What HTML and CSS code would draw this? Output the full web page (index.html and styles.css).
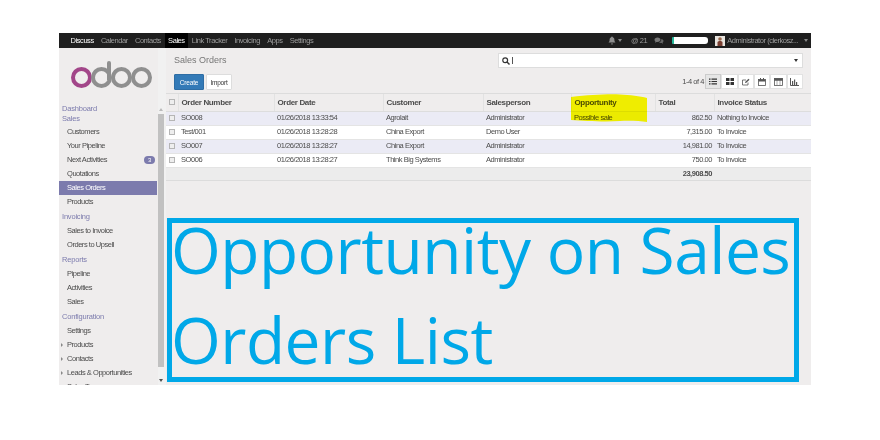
FILE: index.html
```html
<!DOCTYPE html>
<html lang="en">
<head>
  <meta charset="UTF-8">
  <title>Sales Orders - Odoo</title>
  <link rel="stylesheet" href="styles.css">
</head>
<body>
  <div class="window">
    <div class="navbar">
      <div class="apps">
        <a class="app first">Discuss</a>
        <a class="app">Calendar</a>
        <a class="app">Contacts</a>
        <a class="app active">Sales</a>
        <a class="app">Link Tracker</a>
        <a class="app">Invoicing</a>
        <a class="app">Apps</a>
        <a class="app">Settings</a>
      </div>
      <div class="systray">
        <svg class="tray-icon" width="8" height="9" viewBox="0 0 8 9"><path d="M4 0.5c.5 0 .8.3.8.8 1.2.4 1.6 1.4 1.6 2.7 0 1.2.4 1.9 1.1 2.5H.5c.7-.6 1.1-1.3 1.1-2.5 0-1.3.4-2.3 1.6-2.7 0-.5.3-.8.8-.8zM3 7.4h2c0 .6-.4 1-1 1s-1-.4-1-1z" fill="#8f8f8f"/></svg>
        <span class="caret small"></span>
        <span class="tray-text at">@ 21</span>
        <svg class="tray-icon chat" width="10" height="8" viewBox="0 0 10 8"><path d="M3.5.5c1.8 0 3 1 3 2.2S5.3 5 3.5 5c-.4 0-.7 0-1-.1L1 5.8l.4-1.3C.8 4 .5 3.400.5 2.700.5 1.500 1.700.5 3.500.5z" fill="#777"/><path d="M7.300 2c1.300.2 2.200 1 2.200 2 0 .6-.3 1.100-.8 1.500l.3 1.200-1.400-.8c-1.100.2-2.200-.1-2.800-.7 1.700-.1 2.700-1.400 2.500-3.200z" fill="#666"/></svg>
        <span class="redacted"></span>
        <svg class="avatar" width="10" height="10" viewBox="0 0 10 10"><rect width="10" height="10" fill="#e8e4de"/><circle cx="5" cy="3" r="1.800" fill="#9a6a4e"/><path d="M2.500 10V6.500C2.500 5.500 3.500 5 5 5s2.500.5 2.500 1.500V10z" fill="#7a3f32"/></svg>
        <span class="tray-text user">Administrator (clerkosz...</span>
        <span class="caret small"></span>
      </div>
    </div>

    <div class="body-row">
      <aside class="sidebar">
        <div class="logo">
          <span class="logo-o purple"></span><span class="logo-d"><span class="logo-o"></span><span class="logo-stem"></span></span><span class="logo-o"></span><span class="logo-o"></span>
        </div>
        <div class="menu-scroll">
          <div class="menu-head first">Dashboard</div>
          <div class="menu-head">Sales</div>
          <ul class="menu">
            <li>Customers</li>
            <li>Your Pipeline</li>
            <li>Next Activities <span class="badge">3</span></li>
            <li>Quotations</li>
            <li class="selected">Sales Orders</li>
            <li>Products</li>
          </ul>
          <div class="menu-head">Invoicing</div>
          <ul class="menu">
            <li>Sales to Invoice</li>
            <li>Orders to Upsell</li>
          </ul>
          <div class="menu-head">Reports</div>
          <ul class="menu">
            <li>Pipeline</li>
            <li>Activities</li>
            <li>Sales</li>
          </ul>
          <div class="menu-head">Configuration</div>
          <ul class="menu">
            <li>Settings</li>
            <li class="folder">Products</li>
            <li class="folder">Contacts</li>
            <li class="folder">Leads &amp; Opportunities</li>
            <li>Sales Teams</li>
          </ul>
        </div>
      </aside>
      <div class="scrollbar">
        <span class="arrow up"></span>
        <span class="thumb"></span>
        <span class="arrow down"></span>
      </div>

      <main class="main">
        <div class="control-panel">
          <div class="cp-left">
            <div class="breadcrumb">Sales Orders</div>
            <div class="buttons">
              <button class="btn primary">Create</button>
              <button class="btn">Import</button>
            </div>
          </div>
          <div class="cp-right">
            <div class="search">
              <svg width="8" height="8" viewBox="0 0 8 8"><circle cx="3.200" cy="3.200" r="2.400" fill="none" stroke="#333" stroke-width="1.200"/><path d="M5 5l2.500 2.500" stroke="#333" stroke-width="1.400"/></svg>
              <span class="cursor"></span>
              <span class="caret search-caret"></span>
            </div>
            <div class="pager-row">
              <span class="pager">1-4 of 4</span>
              <div class="switcher">
                <span class="view on"><svg width="8" height="7" viewBox="0 0 8 7"><path d="M0 .5h1.500v1.200H0zM2.500 .5H8v1.200H2.500zM0 2.900h1.500v1.200H0zM2.500 2.900H8v1.200H2.500zM0 5.300h1.500v1.200H0zM2.500 5.300H8v1.200H2.500z" fill="#333"/></svg></span>
                <span class="view"><svg width="8" height="7" viewBox="0 0 8 7"><path d="M0 0h3.500v3H0zM4.500 0H8v3H4.500zM0 4h3.500v3H0zM4.500 4H8v3H4.500z" fill="#333"/></svg></span>
                <span class="view"><svg width="8" height="8" viewBox="0 0 8 8"><path d="M6 4.500V7H.5V2H4" fill="none" stroke="#555" stroke-width=".8"/><path d="M3 5l.3-1.300L6.500.7l1 1-3.200 3z" fill="#555"/></svg></span>
                <span class="view"><svg width="8" height="8" viewBox="0 0 8 8"><rect x=".5" y="1.500" width="7" height="6" fill="none" stroke="#555" stroke-width=".8"/><path d="M.5 1.500h7v2h-7zM2 0h1v2H2zM5 0h1v2H5z" fill="#555"/></svg></span>
                <span class="view"><svg width="9" height="8" viewBox="0 0 9 8"><rect x=".5" y=".5" width="8" height="7" fill="none" stroke="#555" stroke-width=".8"/><path d="M.5.500h8v2h-8zM3 2v5M6 2v5" fill="#555" stroke="#555" stroke-width=".5"/></svg></span>
                <span class="view"><svg width="9" height="8" viewBox="0 0 9 8"><path d="M.5 0v7.500H9" fill="none" stroke="#555"/><path d="M2 3h1.200v4H2zM4 1.500h1.200V7H4zM6 4h1.200v3H6z" fill="#555"/></svg></span>
              </div>
            </div>
          </div>
        </div>

        <table class="orders">
          <colgroup>
            <col class="c-check"><col class="c-number"><col class="c-date"><col class="c-customer"><col class="c-person"><col class="c-opp"><col class="c-total"><col class="c-status">
          </colgroup>
          <thead>
            <tr>
              <th><span class="check"></span></th>
              <th>Order Number</th>
              <th>Order Date</th>
              <th>Customer</th>
              <th>Salesperson</th>
              <th>Opportunity</th>
              <th class="total-head">Total</th>
              <th>Invoice Status</th>
            </tr>
          </thead>
          <tbody>
            <tr>
              <td><span class="check"></span></td>
              <td>SO008</td><td>01/26/2018 13:33:54</td><td>Agrolait</td><td>Administrator</td><td>Possible sale</td><td class="num">862.50</td><td>Nothing to Invoice</td>
            </tr>
            <tr>
              <td><span class="check"></span></td>
              <td>Test/001</td><td>01/26/2018 13:28:28</td><td>China Export</td><td>Demo User</td><td></td><td class="num">7,315.00</td><td>To Invoice</td>
            </tr>
            <tr>
              <td><span class="check"></span></td>
              <td>SO007</td><td>01/26/2018 13:28:27</td><td>China Export</td><td>Administrator</td><td></td><td class="num">14,981.00</td><td>To Invoice</td>
            </tr>
            <tr>
              <td><span class="check"></span></td>
              <td>SO006</td><td>01/26/2018 13:28:27</td><td>Think Big Systems</td><td>Administrator</td><td></td><td class="num">750.00</td><td>To Invoice</td>
            </tr>
          </tbody>
          <tfoot>
            <tr>
              <td></td><td></td><td></td><td></td><td></td><td></td><td class="num">23,908.50</td><td></td>
            </tr>
          </tfoot>
        </table>
      </main>
    </div>

    <!-- yellow marker drawn over the Opportunity column -->
    <svg class="marker" width="78" height="30" viewBox="0 0 78 30">
      <path d="M1 3C20 1 35 0 50 .5c10 .5 20 1.500 27 3.500V28C70 27 60 26.500 50 27 35 28 15 27 1 26z" fill="#f0f000"/>
    </svg>

    <!-- caption pasted on top of the screenshot -->
    <div class="caption"><div class="caption-text">Opportunity on Sales Orders List</div></div>
  </div>
</body>
</html>
```

FILE: styles.css
```css
* {
  box-sizing: border-box;
}

body {
  margin: 0;
  background: #fff;
  font-family: "Liberation Sans", Arial, sans-serif;
  font-size: 7.500px;
  letter-spacing: -.45px;
  color: #4c4c4c;
}

.window {
  position: relative;
  width: 752px;
  height: 352px;
  margin: 33px 0 0 59px;
  background: #efeded;
  overflow: hidden;
}

/* top bar */
.navbar {
  display: flex;
  justify-content: space-between;
  height: 15px;
  background: #1f1f1f;
  color: #9d9d9d;
  filter: blur(.25px);
}

.apps {
  display: flex;
  padding-left: 8px;
}

.app {
  padding: 0 3.600px;
  line-height: 15px;
  white-space: nowrap;
}

.app.first {
  color: #fff;
}

.app.active {
  background: #000;
  color: #fff;
}

.systray {
  display: flex;
  align-items: center;
  padding-right: 3px;
}

.tray-icon {
  display: block;
}

.tray-text.at {
  margin-left: 9px;
}

.chat {
  margin-left: 7px;
}

.redacted {
  width: 36px;
  height: 7px;
  margin-left: 8px;
  border-left: 2px solid #26b99a;
  border-radius: 1px 3px 3px 1px;
  background: #fff;
}

.avatar {
  margin-left: 7px;
}

.tray-text.user {
  margin-left: 2px;
  margin-right: 4px;
  white-space: nowrap;
}

.caret {
  display: inline-block;
  width: 0;
  height: 0;
  border-top: 3px solid #888;
  border-left: 2.500px solid transparent;
  border-right: 2.500px solid transparent;
}

.caret.small {
  margin-left: 2px;
}

.body-row {
  display: flex;
  height: 337px;
  filter: blur(.25px);
}

/* left menu */
.sidebar {
  width: 99px;
  overflow: hidden;
}

.logo {
  display: flex;
  align-items: flex-end;
  height: 40px;
  padding-left: 12px;
}

.logo-o {
  display: block;
  width: 21px;
  height: 21px;
  margin-right: -1px;
  border: 4px solid #8f8f8f;
  border-radius: 50%;
}

.logo-o.purple {
  border-color: #a24689;
}

.logo-d {
  position: relative;
  display: block;
}

.logo-stem {
  position: absolute;
  right: 0;
  bottom: 8px;
  width: 4px;
  height: 19px;
  background: #8f8f8f;
  border-radius: 2px 2px 0 0;
}

.menu-scroll {
  padding-top: 16px;
}

.menu-head {
  margin-top: 3px;
  padding-left: 3px;
  color: #7c7bad;
  letter-spacing: -.2px;
  line-height: 10px;
}

.menu-head.first {
  margin-top: 0;
}

.menu-head + .menu-head {
  margin-top: 0;
  margin-bottom: -1px;
}

.menu {
  margin: 2px 0 0;
  padding: 0;
  list-style: none;
}

.menu li {
  position: relative;
  height: 14px;
  padding-left: 8px;
  line-height: 13px;
  white-space: nowrap;
}

.menu li.selected {
  margin-right: 1px;
  background: #7c7bad;
  color: #fff;
}

.menu li.folder::before {
  content: "";
  position: absolute;
  left: 2px;
  top: 5px;
  border-left: 2.500px solid #888;
  border-top: 2px solid transparent;
  border-bottom: 2px solid transparent;
}

.badge {
  position: absolute;
  right: 3px;
  top: 3px;
  width: 11px;
  height: 8px;
  border-radius: 4px;
  background: #7c7bad;
  color: #fff;
  font-size: 6px;
  line-height: 8px;
  text-align: center;
}

.scrollbar {
  position: relative;
  width: 8px;
  background: #f1f1f1;
}

.thumb {
  position: absolute;
  top: 66px;
  left: 0;
  width: 6px;
  height: 253px;
  background: #c1c1c1;
}

.arrow {
  position: absolute;
  left: 1px;
  border-left: 2.500px solid transparent;
  border-right: 2.500px solid transparent;
}

.arrow.up {
  top: 60px;
  border-bottom: 3px solid #bbb;
}

.arrow.down {
  bottom: 3px;
  border-top: 3px solid #505050;
}

/* main area */
.main {
  flex: 1;
  min-width: 0;
}

.control-panel {
  display: flex;
  justify-content: space-between;
  height: 46px;
  padding: 0 8px;
  border-bottom: 1px solid #dcdcdc;
}

.breadcrumb {
  margin-top: 7px;
  font-size: 9px;
  letter-spacing: 0;
  line-height: 11px;
  color: #777;
}

.buttons {
  display: flex;
  gap: 2px;
  margin-top: 8px;
}

.btn {
  width: 26px;
  height: 16px;
  padding: 0;
  border: 1px solid #ddd;
  border-radius: 1px;
  background: #fff;
  color: #333;
  font-family: inherit;
  font-size: 6.500px;
  letter-spacing: -.2px;
}

.btn.primary {
  width: 30px;
  border-color: #2e6da4;
  background: #337ab7;
  color: #fff;
}

.cp-right {
  display: flex;
  flex-direction: column;
  align-items: flex-end;
}

.search {
  position: relative;
  display: flex;
  align-items: center;
  gap: 2px;
  width: 305px;
  height: 15px;
  margin-top: 5px;
  padding-left: 3px;
  border: 1px solid #ddd;
  background: #fff;
}

.cursor {
  width: 1px;
  height: 7px;
  background: #555;
}

.search-caret {
  position: absolute;
  right: 4px;
  top: 5px;
  border-top-color: #333;
}

.pager-row {
  display: flex;
  align-items: center;
  gap: 1px;
  margin-top: 6px;
}

.switcher {
  display: flex;
}

.view {
  display: flex;
  align-items: center;
  justify-content: center;
  width: 16.330px;
  height: 15px;
  border: 1px solid #e2e2e2;
  background: #fff;
}

.view.on {
  background: #e6e6e6;
  border-color: #ccc;
}

.orders {
  width: 100%;
  table-layout: fixed;
  border-collapse: collapse;
}

.c-check { width: 12px; }
.c-number { width: 96px; }
.c-date { width: 109px; }
.c-customer { width: 100px; }
.c-person { width: 88px; }
.c-opp { width: 84px; }
.c-total { width: 59px; }
.c-status { width: auto; }

.orders th {
  height: 17px;
  padding: 0 0 0 3px;
  border-left: 1px solid #e2e2e2;
  border-bottom: 1px solid #ddd;
  text-align: left;
  font-size: 8px;
  font-weight: bold;
  letter-spacing: -.35px;
  white-space: nowrap;
}

.orders th:first-child {
  border-left: 0;
}

.orders td {
  height: 14px;
  padding: 0 0 1px 3px;
  border-bottom: 1px solid #e4e4e4;
  white-space: nowrap;
  overflow: hidden;
}

.orders tbody tr:nth-child(odd) {
  background: #ebebf5;
}

.orders tbody tr:nth-child(even) {
  background: #fff;
}

.orders td.num {
  padding: 0 2px 1px 0;
  text-align: right;
}

.orders tfoot td {
  height: 13px;
  background: #ececec;
  border-bottom: 1px solid #dcdcdc;
  font-weight: bold;
}

.check {
  display: block;
  width: 6px;
  height: 6px;
  border: 1px solid #b5b5b5;
  background: #eee;
}

/* overlays */
.marker {
  position: absolute;
  left: 511px;
  top: 61px;
  mix-blend-mode: darken;
}

.caption {
  position: absolute;
  left: 108px;
  top: 185px;
  width: 632px;
  height: 164px;
  border: 5px solid #00a8e8;
  color: #00a8e8;
  font-family: "Open Sans", sans-serif;
  font-size: 64px;
  letter-spacing: -.5px;
  line-height: 90px;
}

.caption-text {
  margin: -18px 0 0 -1px;
}
```
